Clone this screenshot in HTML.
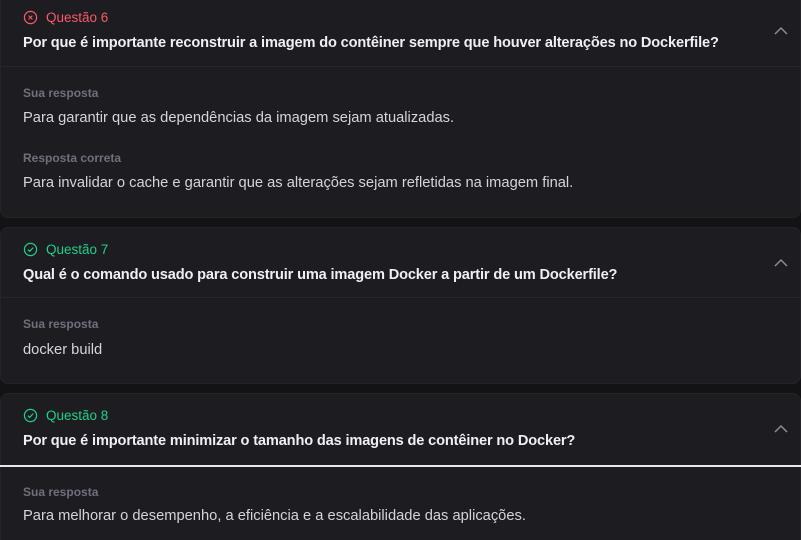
<!DOCTYPE html>
<html><head><meta charset="utf-8"><style>
*{margin:0;padding:0;box-sizing:border-box}
html,body{width:801px;height:540px;overflow:hidden}
body{background:#131316;font-family:"Liberation Sans",sans-serif;position:relative}
.card{position:absolute;left:0;width:801px;background:#1c1c21;border:1px solid #232328;border-radius:8px}
.t{position:absolute;white-space:nowrap}
.q{font-size:13.5px;color:#e1e1e6;display:flex;align-items:center;gap:8px;left:23px}
.qt{font-size:14.6px;font-weight:bold;color:#f0f0f4;left:23px;letter-spacing:-0.15px}
.lab{font-size:12px;font-weight:bold;color:#70707c;left:23px}
.ans{font-size:14.7px;color:#d4d4da;left:23px}
.sep{position:absolute;left:0;right:0;height:1px;background:#26262b}
.chev{position:absolute;left:774px}
</style></head><body>
<div class="card" style="top:-10px;height:228px"></div>
<div class="card" style="top:227px;height:157px"></div>
<div class="card" style="top:393px;height:147px;border-bottom:none;border-radius:8px 8px 0 0"></div>
<div class="sep" style="top:66px"></div>
<div class="sep" style="top:297px"></div>
<div class="sep" style="top:465px;height:2px;background:#e8e8ea"></div>

<svg class="chev" style="top:26px" width="14" height="10" viewBox="0 0 14 10"><path d="M1 8 L7 2 L13 8" fill="none" stroke="#8d8d99" stroke-width="1.5"/></svg>
<svg class="chev" style="top:258px" width="14" height="10" viewBox="0 0 14 10"><path d="M1 8 L7 2 L13 8" fill="none" stroke="#8d8d99" stroke-width="1.5"/></svg>
<svg class="chev" style="top:424px" width="14" height="10" viewBox="0 0 14 10"><path d="M1 8 L7 2 L13 8" fill="none" stroke="#8d8d99" stroke-width="1.5"/></svg>

<div class="t q" style="top:10px;color:#f75a68"><svg width="15" height="15" viewBox="0 0 16 16"><circle cx="8" cy="8" r="6.5" fill="none" stroke="#f75a68" stroke-width="1.3"/><path d="M6 6 L10 10 M10 6 L6 10" stroke="#f75a68" stroke-width="1.2"/></svg>Questão 6</div>
<div class="t qt" style="top:35px">Por que é importante reconstruir a imagem do contêiner sempre que houver alterações no Dockerfile?</div>
<div class="t lab" style="top:86px">Sua resposta</div>
<div class="t ans" style="top:110px">Para garantir que as dependências da imagem sejam atualizadas.</div>
<div class="t lab" style="top:151px">Resposta correta</div>
<div class="t ans" style="top:175px">Para invalidar o cache e garantir que as alterações sejam refletidas na imagem final.</div>

<div class="t q" style="top:242px;color:#1fd08a"><svg width="15" height="15" viewBox="0 0 16 16"><circle cx="8" cy="8" r="6.5" fill="none" stroke="#1fd08a" stroke-width="1.3"/><path d="M5.2 8.2 L7.2 10 L10.8 6" fill="none" stroke="#1fd08a" stroke-width="1.3"/></svg>Questão 7</div>
<div class="t qt" style="top:267px">Qual é o comando usado para construir uma imagem Docker a partir de um Dockerfile?</div>
<div class="t lab" style="top:317px">Sua resposta</div>
<div class="t ans" style="top:342px">docker build</div>

<div class="t q" style="top:408px;color:#1fd08a"><svg width="15" height="15" viewBox="0 0 16 16"><circle cx="8" cy="8" r="6.5" fill="none" stroke="#1fd08a" stroke-width="1.3"/><path d="M5.2 8.2 L7.2 10 L10.8 6" fill="none" stroke="#1fd08a" stroke-width="1.3"/></svg>Questão 8</div>
<div class="t qt" style="top:433px">Por que é importante minimizar o tamanho das imagens de contêiner no Docker?</div>
<div class="t lab" style="top:485px">Sua resposta</div>
<div class="t ans" style="top:508px">Para melhorar o desempenho, a eficiência e a escalabilidade das aplicações.</div>
</body></html>
